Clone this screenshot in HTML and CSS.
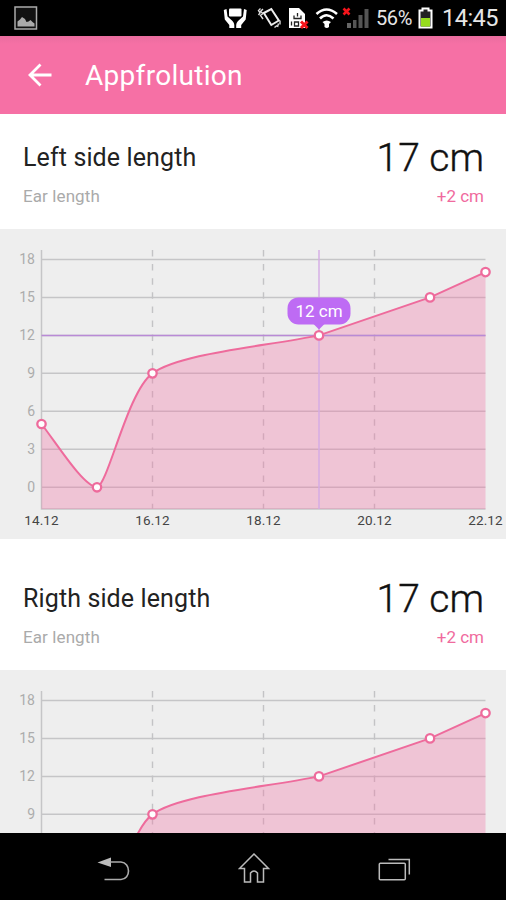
FILE: index.html
```
<!DOCTYPE html>
<html lang="en">
<head>
  <meta charset="UTF-8" />
  <title>Appfrolution</title>
  <link rel="stylesheet" href="styles.css">
</head>
<body>
  <div class="screen">

    <div class="status-bar">
      <svg class="icon-picture" width="24" height="24" viewBox="0 0 24 24">
        <rect x="1" y="1" width="21.500" height="22" fill="#111" stroke="#aaa" stroke-width="1.500" />
        <path d="M3.500 20.500v-5l2.500-2 2-2.500 3 2 1.500 3 2-.5 2-1.500 2 2 2 1.500v3z" fill="#aaa" />
      </svg>
      <div class="status-icons">
        <svg width="131" height="26" viewBox="222 5 131 26">
          <!-- hands holding a card -->
          <rect x="229" y="8.500" width="12.500" height="8" rx="1" fill="#fff" />
          <path d="M223.800 10l2.700-1 1 7.500 5 4.500q1.800 2 1.800 4v3h-5v-3l-4.500-5.500zM246.700 10l-2.700-1-1 7.500-5 4.500q-1.800 2-1.800 4v3h5v-3l4.500-5.500z" fill="#fff" />
          <!-- vibrating phone -->
          <path d="M263.800 13l7.500-4 7.500 11.500-7.500 4.500z" fill="none" stroke="#eee" stroke-width="2" />
          <path d="M263 9l-2.500 2.500 2.500 2-2.500 2 2.500 3.500M260.500 8.500l-2 2 1.500 2.500-1.500 2M274.500 27.500l2.500-2M277.500 27l1-3.500M280 24.500v-4" fill="none" stroke="#ddd" stroke-width="1.400" />
          <!-- sim card error -->
          <path d="M289 8h10l6 6v14h-16z" fill="#fff" />
          <path d="M294 15.500v3h7v-3M297.500 13v3.500M291.500 21.500v4M294.500 22h4v4h-4z" fill="none" stroke="#222" stroke-width="1.300" />
          <path d="M301 21.500l6.500 6.500M307.500 21.500l-6.500 6.500" stroke="#f5141b" stroke-width="3" />
          <!-- wifi -->
          <g fill="none" stroke="#fff" stroke-width="2.600">
            <path d="M316.500 14q10-9 20.500 0" />
            <path d="M320 18.500q6.500-6.500 13.500 0" />
          </g>
          <path d="M322.500 22q4.200-3 8.500 0l-2 2v3q-2.200 2-4.500 0v-3z" fill="#fff" />
          <path d="M343.500 8.500l6 6M349.500 8.500l-6 6" stroke="#f5141b" stroke-width="2.600" />
          <path d="M347 23h4v5h-4z" fill="#666" />
        </svg>
        <svg width="17" height="26" viewBox="353 5 17 26">
          <path d="M353 20h3.500v8H353zM358.500 15h4v13h-4zM364.500 9h4v19h-4z" fill="#555" />
        </svg>
        <span class="battery-level">56%</span>
        <svg class="icon-battery" width="15" height="22" viewBox="0 0 15 22">
          <path d="M1.500 3.500h3v-2h6v2h3v17h-12z" fill="#222" stroke="#fff" stroke-width="2" />
          <path d="M3 11h9v8.500H3z" fill="#96dc1c" />
        </svg>
        <span class="clock">14:45</span>
      </div>
    </div>

    <header class="app-bar">
      <svg width="24" height="24" viewBox="0 0 24 24" fill="none" stroke="#fff" stroke-width="2.800">
        <path d="M12.500 1.500L2 12l10.500 10.500M2.500 12H23.500" />
      </svg>
      <h1>Appfrolution</h1>
    </header>

    <main class="content">
      <section class="card">
        <div class="card-header">
          <div>
            <h2>Left side length</h2>
            <p class="subtitle">Ear length</p>
          </div>
          <div class="values">
            <p class="total">17 cm</p>
            <p class="change">+2 cm</p>
          </div>
        </div>
        <svg class="chart" id="chart-left" width="506" height="310" viewBox="0 0 506 310"></svg>
      </section>

      <section class="card">
        <div class="card-header">
          <div>
            <h2>Rigth side length</h2>
            <p class="subtitle">Ear length</p>
          </div>
          <div class="values">
            <p class="total">17 cm</p>
            <p class="change">+2 cm</p>
          </div>
        </div>
        <svg class="chart" id="chart-right" width="506" height="163" viewBox="0 0 506 163"></svg>
      </section>
    </main>

    <nav class="nav-bar">
      <svg width="34" height="32" viewBox="97 854 34 32">
        <path d="M97.500 863.500l13.500-5v9.500z" fill="#bbb" />
        <path d="M110 863h11c10 1 10 17 0 17.500h-16.500" fill="none" stroke="#aaa" stroke-width="1.600" />
      </svg>
      <svg width="34" height="32" viewBox="238 850 34 32" fill="none" stroke="#bbb" stroke-width="1.500">
        <path d="M253.500 852l14.500 14.500h-5v13.500h-6v-9q-3.500-4-7 0v9h-6v-13.500h-5z" transform="translate(.5 -1)" />
      </svg>
      <svg width="34" height="32" viewBox="378 854 34 32" fill="none" stroke="#bbb" stroke-width="1.500">
        <rect x="379.300" y="864.300" width="26" height="16.500" rx="1" />
        <path d="M388.500 860.500h20.800v15" />
      </svg>
    </nav>
  </div>

  <script src="chart.js"></script>
</body>
</html>
```
FILE: styles.css
```
body {
  margin: 0;
  background: #000;
  font-family: Roboto, sans-serif;
}

h1, h2, p {
  margin: 0;
  font-weight: 400;
}

svg {
  display: block;
  flex: none;
}

.screen {
  display: flex;
  flex-direction: column;
  width: 506px;
  height: 900px;
  overflow: hidden;
}

.status-bar {
  display: flex;
  justify-content: space-between;
  align-items: center;
  height: 36px;
  padding: 0 8px 0 14px;
  color: #e6e6e6;
}

.status-icons {
  display: flex;
  align-items: center;
}

.battery-level {
  width: 36px;
  margin-left: 6px;
  font-size: 20px;
  letter-spacing: -0.4px;
}

.icon-battery {
  margin: 0 9px 0 6px;
}

.clock {
  width: 56px;
  font-size: 23.5px;
  letter-spacing: -0.5px;
}

.app-bar {
  display: flex;
  align-items: center;
  gap: 33px;
  height: 78px;
  flex: none;
  padding-left: 28px;
  background: linear-gradient(#ea6d9f, #f670a5 8px);
  color: #fff;
}

.app-bar h1 {
  font-size: 28px;
  letter-spacing: 0.3px;
}

.content {
  flex: 1;
  overflow: hidden;
  background: #fff;
}

.card {
  height: 441.4px;
}

.card-header {
  display: flex;
  justify-content: space-between;
  height: 115px;
  padding: 0 22px 0 23px;
}

.card-header h2 {
  margin-top: 28px;
  color: #222;
  font-size: 25px;
  line-height: 32px;
  letter-spacing: 0.12px;
}

.subtitle,
.change {
  font-size: 17px;
  line-height: 22px;
}

.subtitle {
  margin-top: 11px;
  color: #aaa;
  letter-spacing: 0.1px;
}

.values {
  text-align: right;
}

.total {
  margin-top: 20px;
  color: #111;
  font-size: 39px;
  font-weight: 300;
  line-height: 49px;
  -webkit-text-stroke: 0.4px #111;
}

.change {
  margin-top: 2px;
  color: #f06a9e;
}

.chart {
  background: #eee;
}

.grid {
  stroke: #c5c5c7;
  stroke-width: 1.5;
}

.dashed {
  stroke: #c3c3c5;
  stroke-width: 1.4;
  stroke-dasharray: 6.5 7.6;
}

.area {
  fill: #f36fa3;
  fill-opacity: 0.33;
}

.line {
  fill: none;
  stroke: #ee6b9c;
  stroke-width: 2;
}

.point {
  fill: #fff;
  stroke: #ee6b9c;
  stroke-width: 2.3;
}

.y-label {
  fill: #acacac;
  font-size: 14px;
  text-anchor: end;
}

.x-label {
  fill: #444;
  font-size: 13.5px;
  letter-spacing: 0.1px;
  text-anchor: middle;
}

.marker-y {
  stroke: #b98ad6;
  stroke-width: 1.5;
}

.marker-x {
  stroke: #d5abe6;
  stroke-width: 1.4;
}

.tip {
  fill: #be6bf4;
}

.tip-text {
  fill: #fff;
  font-size: 17px;
  text-anchor: middle;
}

.nav-bar {
  display: flex;
  justify-content: space-between;
  align-items: center;
  height: 67px;
  flex: none;
  padding: 4px 94px 0 97px;
  box-sizing: border-box;
}
```
FILE: chart.js
```
const days = [14, 16, 18, 20, 22];
const data = [[14, 5], [15, 0], [16, 9], [19, 12], [21, 15], [22, 17]];

const px = day => 41.5 + (day - 14) * 55.5;
const py = value => 258.3 - value * 12.66;

function drawChart(id, selected) {
  const chart = document.getElementById(id);
  const height = chart.height.baseVal.value;
  let svg = "";

  for (let v = 0; v <= 18; v += 3) {
    if (py(v) > height) continue;
    svg += `<line class="grid" x1="41.5" x2="485.5" y1="${py(v)}" y2="${py(v)}" />`;
    svg += `<text class="y-label" x="35" y="${py(v) + 4.3}">${v}</text>`;
  }
  svg += `<path class="grid" d="M41.5 21V280H485.5" fill="none" />`;

  days.forEach(day => {
    if (day > 14 && day < 22) {
      svg += `<line class="dashed" x1="${px(day)}" x2="${px(day)}" y1="21" y2="280" />`;
    }
    if (height > 296) {
      svg += `<text class="x-label" x="${px(day)}" y="296">${day}.12</text>`;
    }
  });

  const curve = `M${px(14)} ${py(5)}
    C${px(14.3)} ${py(3.3)} ${px(14.75)} ${py(0.1)} ${px(15)} ${py(0)}
    C${px(15.2)} ${py(0.2)} ${px(15.55)} ${py(7.6)} ${px(16)} ${py(9)}
    C${px(16.5)} ${py(10.6)} ${px(18)} ${py(11.1)} ${px(19)} ${py(12)}
    L${px(21)} ${py(15)}
    L${px(22)} ${py(17)}`;
  svg += `<path class="area" d="${curve} V280 H41.5 Z" />`;

  if (selected) {
    const [day, value] = selected;
    svg += `<line class="marker-y" x1="41.5" x2="485.5" y1="${py(value)}" y2="${py(value)}" />`;
    svg += `<line class="marker-x" x1="${px(day)}" x2="${px(day)}" y1="21" y2="280" />`;
  }

  svg += `<path class="line" d="${curve}" />`;

  // value bubble over the selected point
  if (selected) {
    const x = px(selected[0]);
    const y = py(selected[1]);
    svg += `<rect class="tip" x="${x - 31.5}" y="${y - 38}" width="63" height="27" rx="11" />`;
    svg += `<path class="tip" d="M${x - 6} ${y - 12}h12l-6 6z" />`;
    svg += `<text class="tip-text" x="${x}" y="${y - 18.5}">${selected[1]} cm</text>`;
  }

  data.forEach(([day, value]) => {
    svg += `<circle class="point" cx="${px(day)}" cy="${py(value)}" r="4.2" />`;
  });

  chart.innerHTML = svg;
}

drawChart("chart-left", [19, 12]);
drawChart("chart-right");
```
